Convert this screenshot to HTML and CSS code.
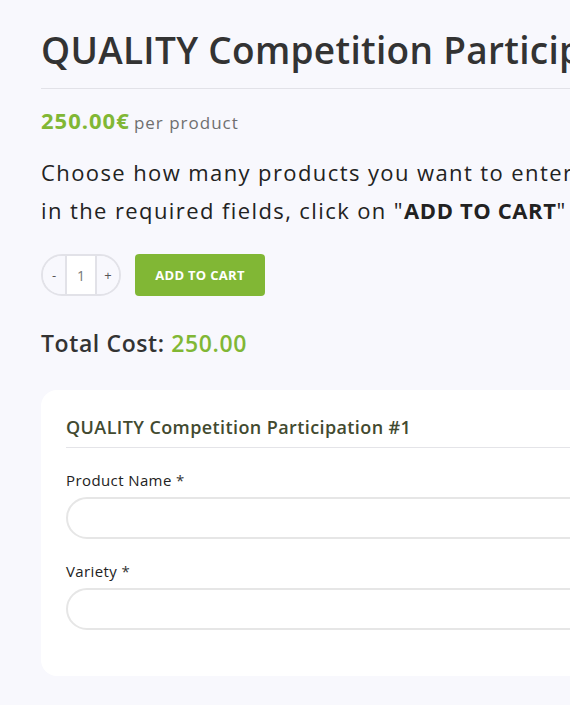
FILE: index.html
```html
<!DOCTYPE html>
<html lang="en">
<head>
<meta charset="utf-8">
<title>QUALITY Competition Participation</title>
<link rel="stylesheet" href="styles.css">
</head>
<body>
<main class="product">
  <h1 class="product-title">QUALITY Competition Participation</h1>
  <p class="price"><span class="price-amount">250.00€</span> <span class="price-unit">per product</span></p>
  <p class="intro">Choose how many products you want to enter the competition with, fill<br>in the required fields, click on "<strong>ADD TO CART</strong>" to complete your participation.</p>
  <form class="cart">
    <div class="qty">
      <button type="button" class="qty-btn">-</button>
      <span class="qty-value">1</span>
      <button type="button" class="qty-btn">+</button>
    </div>
    <button type="button" class="add-btn">ADD TO CART</button>
  </form>
  <p class="total">Total Cost: <span class="total-amount">250.00</span></p>
  <section class="card">
    <h2 class="card-title">QUALITY Competition Participation #1</h2>
    <div class="field">
      <label class="field-label">Product Name <span class="req">*</span></label>
      <div class="field-input"></div>
    </div>
    <div class="field">
      <label class="field-label">Variety <span class="req">*</span></label>
      <div class="field-input"></div>
    </div>
  </section>
</main>
</body>
</html>
```

FILE: styles.css
```css
html, body {
  margin: 0;
  padding: 0;
  overflow: hidden;
  background: #f8f8fd;
}
body {
  font-family: "Open Sans", "Liberation Sans", sans-serif;
  color: #222;
}
.product {
  width: 1100px;
  padding: 22px 0 0 41px;
}
.product-title {
  margin: 0;
  font-size: 37px;
  font-weight: 600;
  line-height: 56px;
  letter-spacing: 0.3px;
  color: #333;
  padding-bottom: 10px;
  border-bottom: 1px solid #e2e2e8;
}
.price {
  margin: 12px 0 0;
  line-height: 38px;
}
.price-amount {
  font-size: 22px;
  font-weight: 700;
  letter-spacing: 1px;
  color: #81b735;
}
.price-unit {
  font-size: 17px;
  letter-spacing: 1px;
  color: #6f6f6f;
}
.intro {
  margin: 11px 0 0;
  font-size: 22px;
  line-height: 38px;
  letter-spacing: 1.4px;
  white-space: nowrap;
  color: #222;
}
.intro strong {
  font-weight: 700;
  letter-spacing: 0.6px;
}
.cart {
  margin-top: 25px;
  display: flex;
  align-items: center;
  gap: 14px;
}
.qty {
  display: flex;
  height: 42px;
  box-sizing: border-box;
  border: 2px solid #e2e2e8;
  border-radius: 21px;
  overflow: hidden;
}
.qty-btn {
  width: 22px;
  border: 0;
  padding: 0;
  background: #f8f8fd;
  font-family: inherit;
  font-size: 13px;
  color: #555;
}
.qty-value {
  width: 28px;
  background: #fff;
  border-left: 2px solid #e2e2e8;
  border-right: 2px solid #e2e2e8;
  display: flex;
  align-items: center;
  justify-content: center;
  font-size: 14px;
  color: #777;
}
.add-btn {
  height: 42px;
  width: 130px;
  border: 0;
  border-radius: 4px;
  background: #81b735;
  color: #fff;
  font-family: inherit;
  font-size: 13px;
  font-weight: 700;
  letter-spacing: 0.3px;
}
.total {
  margin: 31px 0 0;
  font-size: 23px;
  font-weight: 600;
  line-height: 32px;
  letter-spacing: 0.6px;
  color: #333;
}
.total-amount {
  color: #81b735;
}
.card {
  margin-top: 31px;
  background: #fff;
  border-radius: 16px;
  padding: 22px 25px 46px;
}
.card-title {
  margin: 0;
  font-size: 18px;
  font-weight: 600;
  line-height: 30px;
  letter-spacing: 0.4px;
  color: #424a30;
  padding-bottom: 5px;
  border-bottom: 1px solid #e4e4e8;
}
.field {
  margin-top: 20px;
}
.field-label {
  display: block;
  font-size: 15px;
  line-height: 24px;
  letter-spacing: 0.4px;
  color: #222;
  margin-bottom: 5px;
}
.req {
  color: #333;
}
.field-input {
  height: 42px;
  box-sizing: border-box;
  border: 2px solid #e6e6e6;
  border-radius: 21px;
  background: #fff;
}
```
